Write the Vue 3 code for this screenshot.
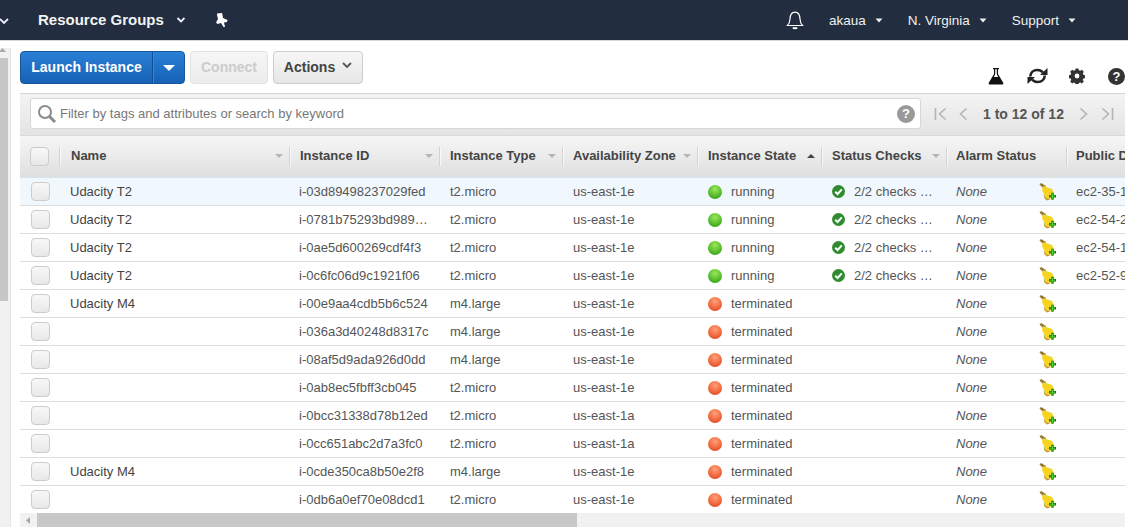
<script setup>
const columns = [
  { label: 'Name', width: 230, sort: true },
  { label: 'Instance ID', width: 150, sort: true },
  { label: 'Instance Type', width: 123, sort: true },
  { label: 'Availability Zone', width: 135, sort: true },
  { label: 'Instance State', width: 124, sort: 'up' },
  { label: 'Status Checks', width: 125, sort: true },
  { label: 'Alarm Status', width: 120, sort: false },
  { label: 'Public DNS', width: 150, sort: false },
]
const gridTemplate = '40px ' + columns.map((c) => c.width + 'px').join(' ')
const rows = [
  ['Udacity T2', 'i-03d89498237029fed', 't2.micro', 'us-east-1e', 'running', 'ec2-35-1', true],
  ['Udacity T2', 'i-0781b75293bd989…', 't2.micro', 'us-east-1e', 'running', 'ec2-54-2'],
  ['Udacity T2', 'i-0ae5d600269cdf4f3', 't2.micro', 'us-east-1e', 'running', 'ec2-54-1'],
  ['Udacity T2', 'i-0c6fc06d9c1921f06', 't2.micro', 'us-east-1e', 'running', 'ec2-52-9'],
  ['Udacity M4', 'i-00e9aa4cdb5b6c524', 'm4.large', 'us-east-1e', 'terminated', ''],
  ['', 'i-036a3d40248d8317c', 'm4.large', 'us-east-1e', 'terminated', ''],
  ['', 'i-08af5d9ada926d0dd', 'm4.large', 'us-east-1e', 'terminated', ''],
  ['', 'i-0ab8ec5fbff3cb045', 't2.micro', 'us-east-1e', 'terminated', ''],
  ['', 'i-0bcc31338d78b12ed', 't2.micro', 'us-east-1a', 'terminated', ''],
  ['', 'i-0cc651abc2d7a3fc0', 't2.micro', 'us-east-1a', 'terminated', ''],
  ['Udacity M4', 'i-0cde350ca8b50e2f8', 'm4.large', 'us-east-1e', 'terminated', ''],
  ['', 'i-0db6a0ef70e08dcd1', 't2.micro', 'us-east-1e', 'terminated', ''],
]
</script>

<template>
  <div class="page">
    <header class="topbar">
      <svg class="caret first" width="10" height="6" viewBox="0 0 10 6"><path d="M1 1l4 4 4-4" /></svg>
      <span class="brand">Resource Groups</span>
      <svg class="caret brandcaret" width="10" height="6" viewBox="0 0 10 6"><path d="M1.500 1l3.500 3.500L8.500 1" /></svg>
      <svg class="pin" width="13" height="15" viewBox="0 0 13 15"><path d="M2 0.500L7 0l0.500 2 0.500 3 4.500 2-0.500 2-3 0.500 1 4.500H8.500L6 10l-3.500 1L1 9.500 3 6 2 2z" fill="#fff" /></svg>
      <div class="spacer"></div>
      <svg class="bell" width="18" height="20" viewBox="0 0 18 20" fill="none" stroke="#fff" stroke-width="1.200"><path d="M1.500 15.500c2-1.800 2.300-3.500 2.500-6.500 0.200-4 2-6.800 5-6.800s4.800 2.800 5 6.800c0.200 3 0.500 4.700 2.500 6.500z" /><path d="M7 17.500c0.500 1 3.500 1 4 0" stroke-width="1.800" /></svg>
      <span class="navitem user">akaua</span>
      <svg class="tri" width="8" height="5" viewBox="0 0 8 5"><path d="M0.500 0.500h7L4 4.500z" /></svg>
      <span class="navitem region">N. Virginia</span>
      <svg class="tri" width="8" height="5" viewBox="0 0 8 5"><path d="M0.500 0.500h7L4 4.500z" /></svg>
      <span class="navitem support">Support</span>
      <svg class="tri" width="8" height="5" viewBox="0 0 8 5"><path d="M0.500 0.500h7L4 4.500z" /></svg>
    </header>

    <div class="body">
      <aside class="rail">
        <div class="rail-track">
          <svg class="rail-arrow" width="7" height="4" viewBox="0 0 7 4"><path d="M3.500 0L7 4H0z" fill="#a8a8a8" /></svg>
          <div class="rail-thumb"></div>
        </div>
      </aside>

      <main class="main">
        <div class="toolbar">
          <div class="launch">
            <span class="launch-label">Launch Instance</span>
            <span class="launch-drop"><svg width="12" height="6" viewBox="0 0 12 6"><path d="M0 0h12L6 6z" fill="#fff" /></svg></span>
          </div>
          <button class="btn disabled">Connect</button>
          <button class="btn actions">Actions
            <svg width="10" height="7" viewBox="0 0 10 7" fill="none" stroke="#555" stroke-width="1.800"><path d="M1 1l4 4 4-4" /></svg>
          </button>
          <div class="spacer"></div>
          <div class="tools">
            <svg width="16" height="18" viewBox="0 0 16 18"><path d="M5 1h6v1.200h-1V7l5.500 9.300-0.800 1.200H1.300l-0.800-1.200L6 7V2.200H5z" fill="#111" /><path d="M7.200 2.200h1.600V7.300l1.400 2.700H5.800l1.400-2.700z" fill="#fff" /></svg>
            <svg width="21" height="18" viewBox="0 0 21 18" fill="none" stroke="#222" stroke-width="2.600"><path d="M3.200 9.500C3.500 5.500 6.500 3 10.500 3c2.500 0 4.200 1 5.300 2.500" /><path d="M17.800 8.500c-0.300 4-3.300 6.500-7.300 6.500-2.500 0-4.200-1-5.300-2.500" /><path d="M13 8h7.500V1z" fill="#222" stroke="none" /><path d="M8 10H0.500v7z" fill="#222" stroke="none" /></svg>
            <svg class="gear" width="16" height="16" viewBox="0 0 16 16"><path d="M6.500 0h3l0.400 2 1.500 0.600 1.700-1.100 2.100 2.100-1.100 1.700 0.600 1.500 2 0.400v3l-2 0.400-0.600 1.500 1.100 1.700-2.100 2.100-1.700-1.100-1.500 0.600-0.400 2h-3l-0.400-2-1.500-0.600-1.700 1.100-2.100-2.100 1.100-1.700-0.600-1.500-2-0.400v-3l2-0.400 0.600-1.500-1.100-1.700 2.100-2.100 1.700 1.100 1.500-0.600z" transform="translate(0.400 0.400) scale(0.950)" fill="#333" /><circle cx="8" cy="8" r="2.400" fill="#fff" /></svg>
            <span class="helpdot dark">?</span>
          </div>
        </div>

        <div class="filterbar">
          <div class="filter">
            <svg class="search" width="20" height="20" viewBox="0 0 20 20" fill="none" stroke="#8b8b8b"><circle cx="8" cy="8" r="6" stroke-width="2" /><path d="M12.500 12.500l5.500 5.500" stroke-width="3" /></svg>
            <span class="placeholder">Filter by tags and attributes or search by keyword</span>
            <div class="spacer"></div>
            <span class="helpdot grey">?</span>
          </div>
          <div class="pager">
            <svg width="13" height="14" viewBox="0 0 13 14" fill="none" stroke="#b4b4b4" stroke-width="1.600"><path d="M1.500 1v12M11.500 1.500L5.500 7l6 5.500" /></svg>
            <svg class="p2" width="9" height="14" viewBox="0 0 9 14" fill="none" stroke="#b4b4b4" stroke-width="1.600"><path d="M7.500 1.500L1.500 7l6 5.500" /></svg>
            <span class="pagetext">1 to 12 of 12</span>
            <svg class="p3" width="9" height="14" viewBox="0 0 9 14" fill="none" stroke="#b4b4b4" stroke-width="1.600"><path d="M1.500 1.500L7.500 7l-6 5.500" /></svg>
            <svg class="p4" width="13" height="14" viewBox="0 0 13 14" fill="none" stroke="#b4b4b4" stroke-width="1.600"><path d="M11.500 1v12M1.500 1.500L7.500 7l-6 5.500" /></svg>
          </div>
        </div>

        <div class="tablewrap">
          <div class="thead" :style="{ gridTemplateColumns: gridTemplate }">
            <div class="th chk"><span class="checkbox head"></span></div>
            <div v-for="c in columns" :key="c.label" class="th">
              <span class="thlabel">{{ c.label }}</span>
              <svg v-if="c.sort === true" class="sort" width="8" height="4" viewBox="0 0 8 4"><path d="M0 0h8L4 4z" fill="#b5b5b5" /></svg>
              <svg v-else-if="c.sort === 'up'" class="sort" width="8" height="4" viewBox="0 0 8 4"><path d="M0 4h8L4 0z" fill="#444" /></svg>
            </div>
          </div>
          <div
            v-for="r in rows"
            :key="r[1]"
            class="tr"
            :class="{ selected: r[6] }"
            :style="{ gridTemplateColumns: gridTemplate }"
          >
            <div class="td chk"><span class="checkbox"></span></div>
            <div class="td name">{{ r[0] }}</div>
            <div class="td iid">{{ r[1] }}</div>
            <div class="td">{{ r[2] }}</div>
            <div class="td">{{ r[3] }}</div>
            <div class="td state">
              <span class="dot" :class="r[4]"></span>{{ r[4] }}
            </div>
            <div class="td checks">
              <template v-if="r[4] === 'running'">
                <svg class="okicon" width="13" height="13" viewBox="0 0 13 13"><circle cx="6.500" cy="6.500" r="6.500" fill="#2e8b2e" /><path d="M3.200 6.700l2.400 2.300 4.200-4.700" fill="none" stroke="#fff" stroke-width="2" /></svg>
                2/2 checks …
              </template>
            </div>
            <div class="td alarm">
              <em>None</em>
              <svg class="broom" width="18" height="18" viewBox="0 0 18 18">
                <path d="M0.500 1.500L2 0l5 3-2 3z" fill="#96762a" />
                <path d="M4 3l9 3 2.500 5-4.500 5.500-4-1.500L3 7z" fill="#f6d31e" />
                <path d="M4.500 11l2.500 4 4 1.500-3 1-2.500-2z" fill="#b89a30" />
                <path d="M10 12h2.300V9.700h2.400V12H17v2.400h-2.300v2.300h-2.400v-2.300H10z" fill="#167a16" />
                <path d="M11 12.800h2.100v-2.200h0.800v2.200H16v0.800h-2.100v2.200h-0.800v-2.200H11z" fill="#5ede3a" />
              </svg>
            </div>
            <div class="td pub">{{ r[5] }}</div>
          </div>
        </div>

        <div class="hscroll">
          <svg class="harrow" width="4" height="7" viewBox="0 0 4 7"><path d="M4 0v7L0 3.500z" fill="#a8a8a8" /></svg>
          <div class="hthumb"></div>
        </div>
      </main>
      <div class="rightgap"></div>
    </div>
  </div>
</template>

<style>
html, body { margin: 0; padding: 0; background: #fff; overflow: hidden; }
</style>

<style scoped>
.page {
  width: 1128px;
  height: 527px;
  display: flex;
  flex-direction: column;
  overflow: hidden;
  font-family: "Liberation Sans", Arial, sans-serif;
  font-size: 13px;
  color: #444;
  background: #fff;
}
.topbar {
  flex: 0 0 40px;
  height: 40px;
  background: #222e3f;
  display: flex;
  align-items: center;
  color: #fff;
  box-shadow: 0 1px 0 #d8d8d8;
}
.spacer { flex: 1; }
.caret { fill: none; stroke: #eef; stroke-width: 1.800; }
.first { margin-left: -1px; margin-top: 1px; }
.brand { margin-left: 29px; margin-bottom: 2px; font-size: 15px; font-weight: bold; color: #f3f3f3; }
.brandcaret { margin-left: 12px; }
.pin { margin-left: 29px; }
.bell { margin-right: 25px; }
.navitem { font-size: 13.500px; color: #f0f0f0; }
.tri { fill: #eee; margin-left: 9px; }
.region { margin-left: 25px; }
.support { margin-left: 25px; }
.topbar > .tri:last-child { margin-right: 52px; }

.body { flex: 1; min-height: 0; display: flex; }
.rail {
  flex: 0 0 20px;
  width: 20px;
  padding-top: 1px;
  box-sizing: border-box;
}
.rail-track {
  width: 10px;
  height: 100%;
  background: #f1f1f1;
  border-right: 1px solid #e6e6e6;
  box-sizing: content-box;
  position: relative;
}
.rail-arrow { display: block; margin: 7px 0 0 -1px; }
.rail-thumb { width: 8px; height: 243px; margin-top: 6px; background: #c6c6c6; }
.main { flex: 0 0 1105px; width: 1105px; display: flex; flex-direction: column; min-width: 0; }
.rightgap { flex: 1; }

.toolbar {
  flex: 0 0 53px;
  height: 53px;
  padding-top: 11px;
  box-sizing: border-box;
  display: flex;
  align-items: flex-start;
}
.launch {
  width: 165px;
  height: 33px;
  box-sizing: border-box;
  display: flex;
  border-radius: 4px;
  border: 1px solid #15569c;
  background: linear-gradient(#2a80d6, #1561b5);
  color: #fff;
  font-weight: bold;
}
.launch-label { flex: 0 0 131px; line-height: 30px; text-align: center; font-size: 14px; border-right: 1px solid #114f96; }
.launch-drop { flex: 1; display: flex; align-items: center; justify-content: center; border-left: 1px solid #3a86d2; }
.btn {
  font: bold 14px "Liberation Sans", Arial, sans-serif;
  height: 33px;
  box-sizing: border-box;
  margin-left: 5px;
  border-radius: 4px;
  border: 1px solid #ccc;
  background: linear-gradient(#f7f7f7, #e6e6e6);
  padding: 0 0 2px;
  color: #444;
}
.disabled { width: 78px; color: #ccc; border-color: #e2e2e2; background: linear-gradient(#f6f6f6, #ececec); }
.actions { width: 90px; display: flex; align-items: center; justify-content: center; gap: 7px; }
.actions svg { margin-top: -2px; }
.tools {
  display: flex;
  align-items: center;
  gap: 23px;
  margin-top: 15px;
  height: 20px;
}
.gear { margin-left: -2px; }
.helpdot {
  display: inline-flex;
  align-items: center;
  justify-content: center;
  border-radius: 50%;
  color: #fff;
  font-weight: bold;
  font-size: 13px;
}
.helpdot.dark { width: 17px; height: 17px; background: #333; }
.helpdot.grey { width: 18px; height: 18px; background: #999; margin-right: 5px; }

.filterbar {
  flex: 0 0 42px;
  height: 42px;
  box-sizing: border-box;
  border-top: 1px solid #d5d5d5;
  background: linear-gradient(#f3f3f3, #e4e4e4);
  padding: 4px 0 0 10px;
  display: flex;
  align-items: flex-start;
}
.filter {
  width: 891px;
  height: 31px;
  box-sizing: border-box;
  background: #fff;
  border: 1px solid #d6d6d6;
  border-radius: 3px;
  display: flex;
  align-items: center;
  padding-left: 6px;
}
.placeholder { margin-left: 3px; color: #777; font-size: 13px; }
.pager { display: flex; align-items: center; height: 31px; margin-left: 13px; }
.p2 { margin-left: 12px; }
.pagetext { margin-left: 15px; font-size: 14px; font-weight: bold; color: #555; }
.p3 { margin-left: 15px; }
.p4 { margin-left: 13px; }

.tablewrap { flex: 1; min-height: 0; overflow: hidden; }
.thead {
  display: grid;
  height: 43px;
  box-sizing: border-box;
  border-top: 1px solid #d9d9d9;
  border-bottom: 1px solid #d8e4ec;
  background: linear-gradient(#f6f6f6, #dfdfdf);
}
.th {
  position: relative;
  display: flex;
  align-items: center;
  justify-content: space-between;
  padding: 0 7px 0 10px;
  box-sizing: border-box;
  font-weight: bold;
  color: #444;
  white-space: nowrap;
  overflow: visible;
  min-width: 0;
}
.th:nth-child(2) { padding-left: 11px; }
.th:nth-child(8), .th:nth-child(9) { padding-left: 9px; }
.th::after {
  content: "";
  position: absolute;
  right: 0;
  top: 11px;
  height: 19px;
  border-right: 1px solid #d2d2d2;
  box-shadow: 1px 0 0 #f8f8f8;
}
.thlabel { font-size: 13px; margin-bottom: 2px; }
.sort { flex: none; margin-bottom: 1px; }
.tr {
  display: grid;
  height: 28px;
  box-sizing: border-box;
  border-bottom: 1px solid #dcdcdc;
  background: #fff;
}
.tr.selected { background: #f1f8fd; }
.td {
  display: flex;
  align-items: center;
  padding: 0 10px;
  box-sizing: border-box;
  white-space: nowrap;
  overflow: hidden;
  font-size: 13px;
  color: #555;
  min-width: 0;
  line-height: 27px;
}
.name { color: #444; }
.iid { padding-left: 9px; }
.pub { padding-left: 9px; }
.chk { padding: 0 0 0 11px; overflow: visible; }
.th.chk { padding-left: 10px; justify-content: flex-start; }
.checkbox {
  display: block;
  width: 19px;
  height: 19px;
  box-sizing: border-box;
  border: 1px solid #ccc;
  border-radius: 4px;
  background: linear-gradient(#f8f8f8, #e8e8e8);
}
.dot {
  width: 14px;
  height: 14px;
  border-radius: 50%;
  margin-right: 9px;
  flex: none;
}
.dot.running { background: radial-gradient(circle at 50% 30%, #9be85a, #52b82a 60%, #2f8f1d); }
.dot.terminated { background: radial-gradient(circle at 50% 30%, #ffa07a, #f0643c 60%, #c93c22); }
.okicon { margin-right: 9px; flex: none; }
.alarm { padding-left: 9px; position: relative; }
.alarm em { color: #555; }
.broom { position: absolute; left: 92px; top: 5px; }

.hscroll {
  flex: 0 0 14px;
  height: 14px;
  background: #f1f1f1;
  display: flex;
  align-items: stretch;
}
.harrow { margin: 4px 0 0 6px; }
.hthumb { width: 540px; margin-left: 7px; background: #c8c8c8; }
</style>
